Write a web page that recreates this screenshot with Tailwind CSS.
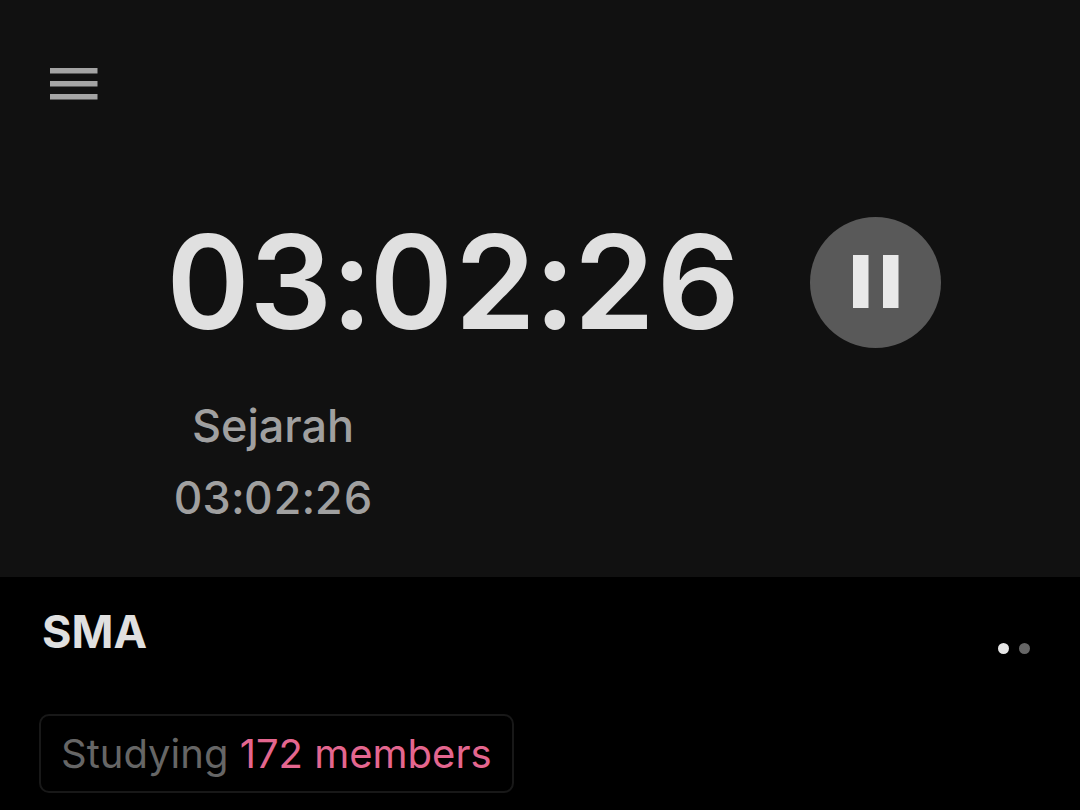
<!DOCTYPE html>
<html lang="id">
<head>
<meta charset="utf-8">
<meta name="viewport" content="width=device-width, initial-scale=1">
<title>Study timer</title>
<script src="https://cdn.jsdelivr.net/npm/@tailwindcss/browser@4"></script>
</head>
<body class="flex min-h-screen flex-col bg-black font-['Inter',sans-serif] [font-feature-settings:'calt'_0]">
<main class="bg-[#111111] pt-[60px] pb-[43px]">
  <header class="px-[42px]">
    <button aria-label="Menu" class="block p-2 text-[#a4a4a4]">
      <svg width="48" height="32" viewBox="0 0 48 32" fill="currentColor"><path d="M0 0h47.500v5.500H0zM0 13h47.500v5.500H0zM0 26h47.500v5.500H0z"/></svg>
    </button>
  </header>
  <section class="mt-[94px] flex items-center gap-[70px] pl-[166px]">
    <h1 class="text-[130px] leading-[160px] font-semibold whitespace-nowrap text-[#e0e0e0] tabular-nums">03:02:26</h1>
    <button aria-label="Pause" class="flex size-[131px] shrink-0 items-center justify-center rounded-full bg-[#595959] text-[#e9e9e9]">
      <svg width="46" height="54" viewBox="0 0 46 54" fill="currentColor"><path d="M0 0h15.500v53H0zM30 0h15.500v53H30z"/></svg>
    </button>
  </section>
  <section class="mt-7 ml-[172px] w-[202px] text-center text-[45px] leading-[72px] font-medium text-[#a0a0a0]">
    <h2>Sejarah</h2>
    <p class="tabular-nums">03:02:26</p>
  </section>
</main>
<section class="px-[39px] pt-[31px]">
  <div class="flex items-center justify-between">
    <h2 class="pl-[3px] text-[45px] leading-[48px] font-bold text-[#e0e0e0]">SMA</h2>
    <div class="mt-8 mr-[11px] flex gap-[10px]"><span class="size-[11px] rounded-full bg-[#e6e6e6]"></span><span class="size-[11px] rounded-full bg-[#666666]"></span></div>
  </div>
  <button class="mt-[58px] h-[79px] rounded-[10px] border-2 border-[#181818] px-5 text-[40px] text-[#666666]">Studying <span class="text-[#e4668f]">172 members</span></button>
</section>
</body>
</html>
